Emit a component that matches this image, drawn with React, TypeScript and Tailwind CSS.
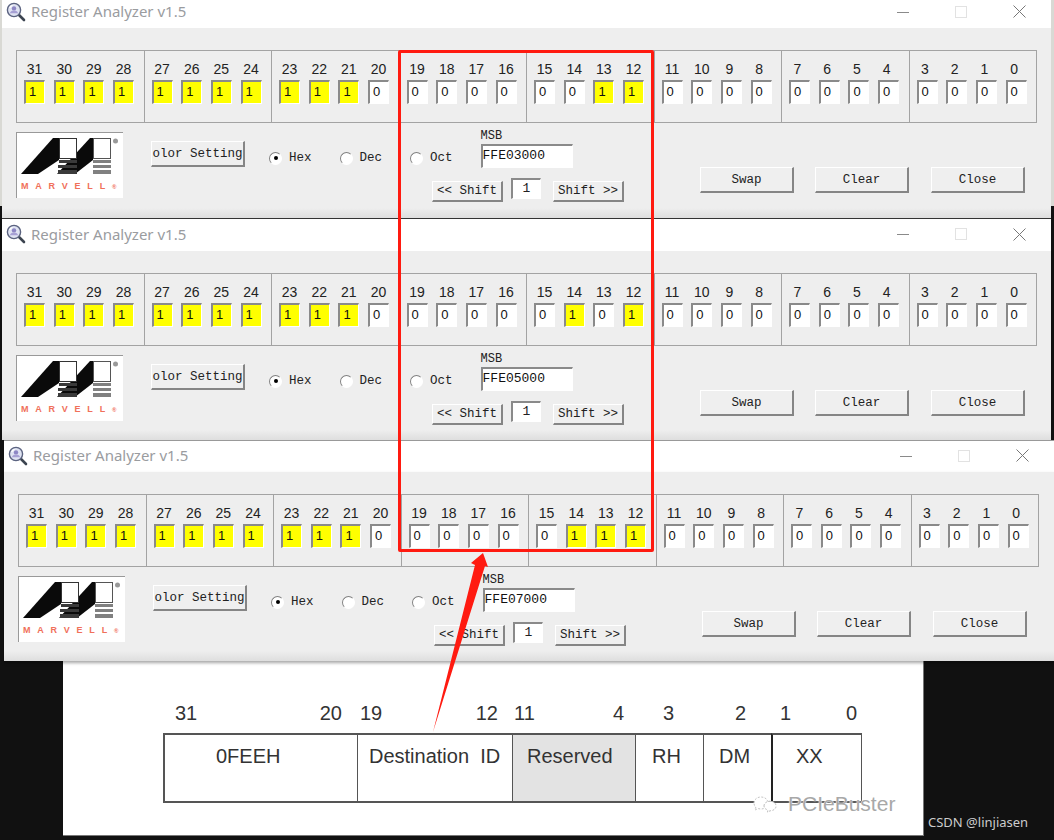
import type { ReactNode } from "react";

const GROUP_BITS = [
  [31, 30, 29, 28],
  [27, 26, 25, 24],
  [23, 22, 21, 20],
  [19, 18, 17, 16],
  [15, 14, 13, 12],
  [11, 10, 9, 8],
  [7, 6, 5, 4],
  [3, 2, 1, 0],
];

const FIELDS = [
  { width: "w-[194px]", left: "31", right: "20", name: "0FEEH", nameClass: "pl-[51px]", lead: "pl-[12px] pr-[15px]", cell: "border-l-2" },
  { width: "w-[155px]", left: "19", right: "12", name: "Destination\u00a0 ID", nameClass: "pl-[11px]", lead: "pl-[3px] pr-[14px]", cell: "border-l" },
  { width: "w-[123px]", left: "11", right: "4", name: "Reserved", nameClass: "pl-[14px] bg-[#e3e3e3]", lead: "pl-[2px] pr-[11px]", cell: "border-l" },
  { width: "w-[68px]", left: "3", right: "", name: "RH", nameClass: "pl-[16px]", lead: "pl-[28px]", cell: "border-l" },
  { width: "w-[68px]", left: "2", right: "", name: "DM", nameClass: "pl-[15px]", lead: "pl-[32px]", cell: "border-l" },
  { width: "w-[91px]", left: "1", right: "0", name: "XX", nameClass: "pl-[23px]", lead: "pl-[9px] pr-[5px]", cell: "border-l-2 border-l-[#222] border-r" },
];

function isSet(hex: string, bit: number) {
  const nibble = parseInt(hex[7 - Math.floor(bit / 4)], 16);
  return ((nibble >> (bit % 4)) & 1) === 1;
}

function SearchIcon() {
  return (
    <svg width="20" height="20" viewBox="0 0 20 20" className="shrink-0">
      <path d="M12.5 12.5L18 18" stroke="#3c4450" strokeWidth="2.6" strokeLinecap="round" />
      <circle cx="8" cy="8" r="6.6" fill="#dfe3f2" stroke="#5b6380" strokeWidth="1.4" />
      <circle cx="8" cy="6.4" r="2.2" fill="#8d86c4" />
      <path d="M3.8 11.2c1-2 2.4-2.6 4.2-2.6s3.2.6 4.2 2.6" fill="#a6a0d4" />
      <path d="M3.6 6a5 5 0 0 1 3-2.6" stroke="#ffffff" strokeWidth="1.2" fill="none" />
    </svg>
  );
}

function WindowControls() {
  return (
    <div className="ml-auto flex items-center">
      <svg width="12" height="12" viewBox="0 0 12 12" className="mr-[46px]">
        <path d="M0 6.5h12" stroke="#8a8a8a" strokeWidth="1" />
      </svg>
      <svg width="12" height="12" viewBox="0 0 12 12" className="mr-[46px]">
        <rect x="0.5" y="0.5" width="11" height="11" fill="none" stroke="#e2e2e2" />
      </svg>
      <svg width="13" height="13" viewBox="0 0 13 13" className="mr-[25px]">
        <path d="M0.5 0.5l12 12M12.5 0.5l-12 12" stroke="#777" strokeWidth="1" />
      </svg>
    </div>
  );
}

function Logo() {
  return (
    <div className="flex h-[66px] w-[107px] shrink-0 flex-col border-t border-l border-[#999] bg-white">
      <svg width="106" height="46" viewBox="0 0 106 46" className="shrink-0">
        <path d="M4 41L36 5h6v22L21 41z" fill="#0a0a0a" />
        <path d="M40 41L73 5h3v22L58 41z" fill="#0a0a0a" />
        <rect x="42.500" y="5.500" width="17" height="20" fill="#fff" stroke="#333" />
        <rect x="76.500" y="5.500" width="17" height="20" fill="#fff" stroke="#555" />
        <path d="M42 27h18v3H42zM41 32h19v3H41zM41 37h19v4H41z" fill="#3a3a3a" />
        <path d="M76 27h18v3H76zM76 32h18v3H76zM76 37h18v4H76z" fill="#808080" />
        <circle cx="98.500" cy="8" r="2.500" fill="#999" />
      </svg>
      <div className="pl-[4px] font-['Liberation_Sans',sans-serif] text-[9px] leading-[14px] font-bold tracking-[6.8px] text-[#f0705a]">
        MARVELL<span className="text-[6px] tracking-normal">®</span>
      </div>
    </div>
  );
}

function RaisedButton({ label, className }: { label: string; className: string }) {
  return (
    <div
      className={`flex shrink-0 items-center justify-center border-t border-l border-r-2 border-b-2 border-t-white border-l-white border-r-[#858585] border-b-[#858585] bg-[#efefef] pt-[1px] text-[#222] ${className}`}
    >
      {label}
    </div>
  );
}

function Radio({ label, checked, className }: { label: string; checked?: boolean; className: string }) {
  return (
    <div className={`mt-[19px] flex h-[14px] shrink-0 items-center gap-[7px] ${className}`}>
      <div className="flex h-[13px] w-[13px] items-center justify-center rounded-full border border-t-[#808080] border-l-[#808080] border-r-white border-b-white bg-white">
        {checked && <div className="h-[4px] w-[4px] rounded-full bg-black" />}
      </div>
      <span>{label}</span>
    </div>
  );
}

function SunkenBox({ children, className }: { children: ReactNode; className: string }) {
  return (
    <div
      className={`border-t-2 border-l-2 border-r border-b border-t-[#8a8a8a] border-l-[#8a8a8a] border-r-white border-b-white ${className}`}
    >
      {children}
    </div>
  );
}

function RegisterWindow({
  value,
  titleClass,
  bodyClass,
  className,
}: {
  value: string;
  titleClass: string;
  bodyClass: string;
  className: string;
}) {
  return (
    <div className={`shrink-0 ${className}`}>
      <div className={`flex items-center gap-[5px] bg-white pl-[4px] ${titleClass}`}>
        <SearchIcon />
        <span className="font-['Noto_Sans',sans-serif] text-[15px] text-[#9a9c9f]">Register Analyzer v1.5</span>
        <WindowControls />
      </div>
      <div className={`bg-[linear-gradient(180deg,#eeeeee_0,#eeeeee_calc(100%-10px),#dedede_100%)] pt-[22px] pl-[14px] ${bodyClass}`}>
        <div className="flex h-[73px] w-[1021px] border border-[#a3a3a3]">
          {GROUP_BITS.map((bits, i) => (
            <div key={i} className="flex flex-1 gap-[8.7px] border-r border-[#a3a3a3] pl-[7px] last:border-r-0">
              {bits.map((bit) => {
                const on = isSet(value, bit);
                return (
                  <div key={bit} className="flex w-[21px] flex-col items-center pt-[10px]">
                    <div className={`h-[19px] whitespace-nowrap font-['Liberation_Sans',sans-serif] text-[14px] leading-[17px] text-[#222] ${bit < 10 ? "mr-[4px]" : ""}`}>
                      {bit}
                    </div>
                    <SunkenBox
                      className={`h-[24px] w-[21px] pl-[3px] font-['Liberation_Sans',sans-serif] text-[13px] leading-[19px] text-[#111] ${on ? "bg-[#ffff00]" : "bg-white"}`}
                    >
                      {on ? "1" : "0"}
                    </SunkenBox>
                  </div>
                );
              })}
            </div>
          ))}
        </div>

        <div className="mt-[9px] flex font-['Liberation_Mono',monospace] text-[12.5px] text-[#222]">
          <Logo />
          <div className="flex shrink-0 flex-col">
            <div className="flex h-[36px]">
              <RaisedButton label="olor Setting" className="mt-[9px] ml-[28px] h-[26px] w-[94px]" />
              <Radio label="Hex" checked className="ml-[24px]" />
              <Radio label="Dec" className="ml-[28px]" />
              <Radio label="Oct" className="ml-[28px]" />
              <div className="ml-[28px] w-[92px] shrink-0">
                <div className="h-[12px] text-[12px] leading-[8px]">MSB</div>
                <SunkenBox className="h-[24px] bg-white text-[13px] leading-[20px] text-[#111]">{value}</SunkenBox>
              </div>
            </div>
            <div className="mt-[10px] ml-[309px] flex">
              <RaisedButton label="<< Shift" className="mt-[3px] h-[21px] w-[71px]" />
              <SunkenBox className="ml-[8px] h-[21px] w-[30px] bg-white text-center text-[13px] leading-[17px]">1</SunkenBox>
              <RaisedButton label="Shift >>" className="mt-[3px] ml-[12px] h-[21px] w-[71px]" />
            </div>
          </div>
          <div className="mt-[35px] ml-[76px] flex h-[26px]">
            <RaisedButton label="Swap" className="w-[94px]" />
            <RaisedButton label="Clear" className="ml-[21px] w-[94px]" />
            <RaisedButton label="Close" className="ml-[22px] w-[94px]" />
          </div>
        </div>
      </div>
    </div>
  );
}

function PacketDiagram() {
  return (
    <div className="relative ml-[100px] flex pt-[40px] font-['Liberation_Sans',sans-serif] text-[20px] text-[#333]">
      {FIELDS.map((field) => (
        <div key={field.name} className={`shrink-0 ${field.width}`}>
          <div className={`mb-[8px] flex h-[24px] justify-between leading-[24px] ${field.lead}`}>
            <span>{field.left}</span>
            <span>{field.right}</span>
          </div>
          <div className={`h-[70px] border-y-2 border-[#555] pt-[9px] leading-[24px] ${field.cell} ${field.nameClass}`}>
            {field.name}
          </div>
        </div>
      ))}
      <div className="absolute top-[127px] left-[589px] flex items-center gap-[10px]">
        <svg width="26" height="18" viewBox="0 0 26 18">
          <path d="M2 8c0-3.500 3-6 7-6s7 2.500 7 6-3 6-7 6c-1 0-2-.2-3-.5L3 15l.7-2.800C2.600 11.200 2 9.800 2 8z" fill="#fff" stroke="#c4c4c4" strokeDasharray="2 1.500" />
          <path d="M12 11c0-2.800 2.600-4.800 6-4.800s6 2 6 4.800-2.600 4.800-6 4.800l-2.500 1.400.4-2.200C13 14 12 12.700 12 11z" fill="#fff" stroke="#bdbdbd" strokeDasharray="2 1.500" />
        </svg>
        <span className="text-[21px] text-[#a8a8a8] [text-shadow:0_0_2px_#ffffff,0_0_1px_#ffffff]">PCIeBuster</span>
      </div>
    </div>
  );
}

export default function App() {
  return (
    <div className="relative h-[840px] w-[1054px] overflow-hidden bg-[linear-gradient(180deg,#d9d9d4_0,#d9d9d4_206px,#111111_206px)]">
      <RegisterWindow value="FFE03000" titleClass="h-[28px] pb-[5px]" bodyClass="h-[190px]" className="ml-[2px] w-[1049px]" />
      <RegisterWindow
        value="FFE05000"
        titleClass="h-[33px] border-t border-t-[#333] pb-[2px]"
        bodyClass="h-[189px]"
        className="ml-[2px] w-[1049px]"
      />
      <RegisterWindow
        value="FFE07000"
        titleClass="h-[32px] border-t border-t-[#999] pb-[2px]"
        bodyClass="h-[189px] shadow-[0_2px_3px_rgba(0,0,0,0.35)]"
        className="relative z-10 ml-[4px] w-[1050px]"
      />

      <div className="ml-[63px] flex">
        <div className="h-[175px] w-[861px] shrink-0 border-r border-b border-[#777] bg-white">
          <PacketDiagram />
        </div>
        <div className="mt-[151px] ml-[4px] font-['Noto_Sans',sans-serif] text-[13px] leading-[20px] whitespace-nowrap text-[#cccccc]">
          CSDN @linjiasen
        </div>
      </div>

      <div className="absolute top-[50px] left-[398px] z-20 h-[502px] w-[256px] rounded-[2px] border-[3px] border-[#ff1a10]" />
      <svg width="1054" height="840" viewBox="0 0 1054 840" className="pointer-events-none absolute top-0 left-0 z-20">
        <path d="M433 732L485 566l3 1-5-14-12 10 4 2z" fill="#ff1a10" />
      </svg>
    </div>
  );
}
